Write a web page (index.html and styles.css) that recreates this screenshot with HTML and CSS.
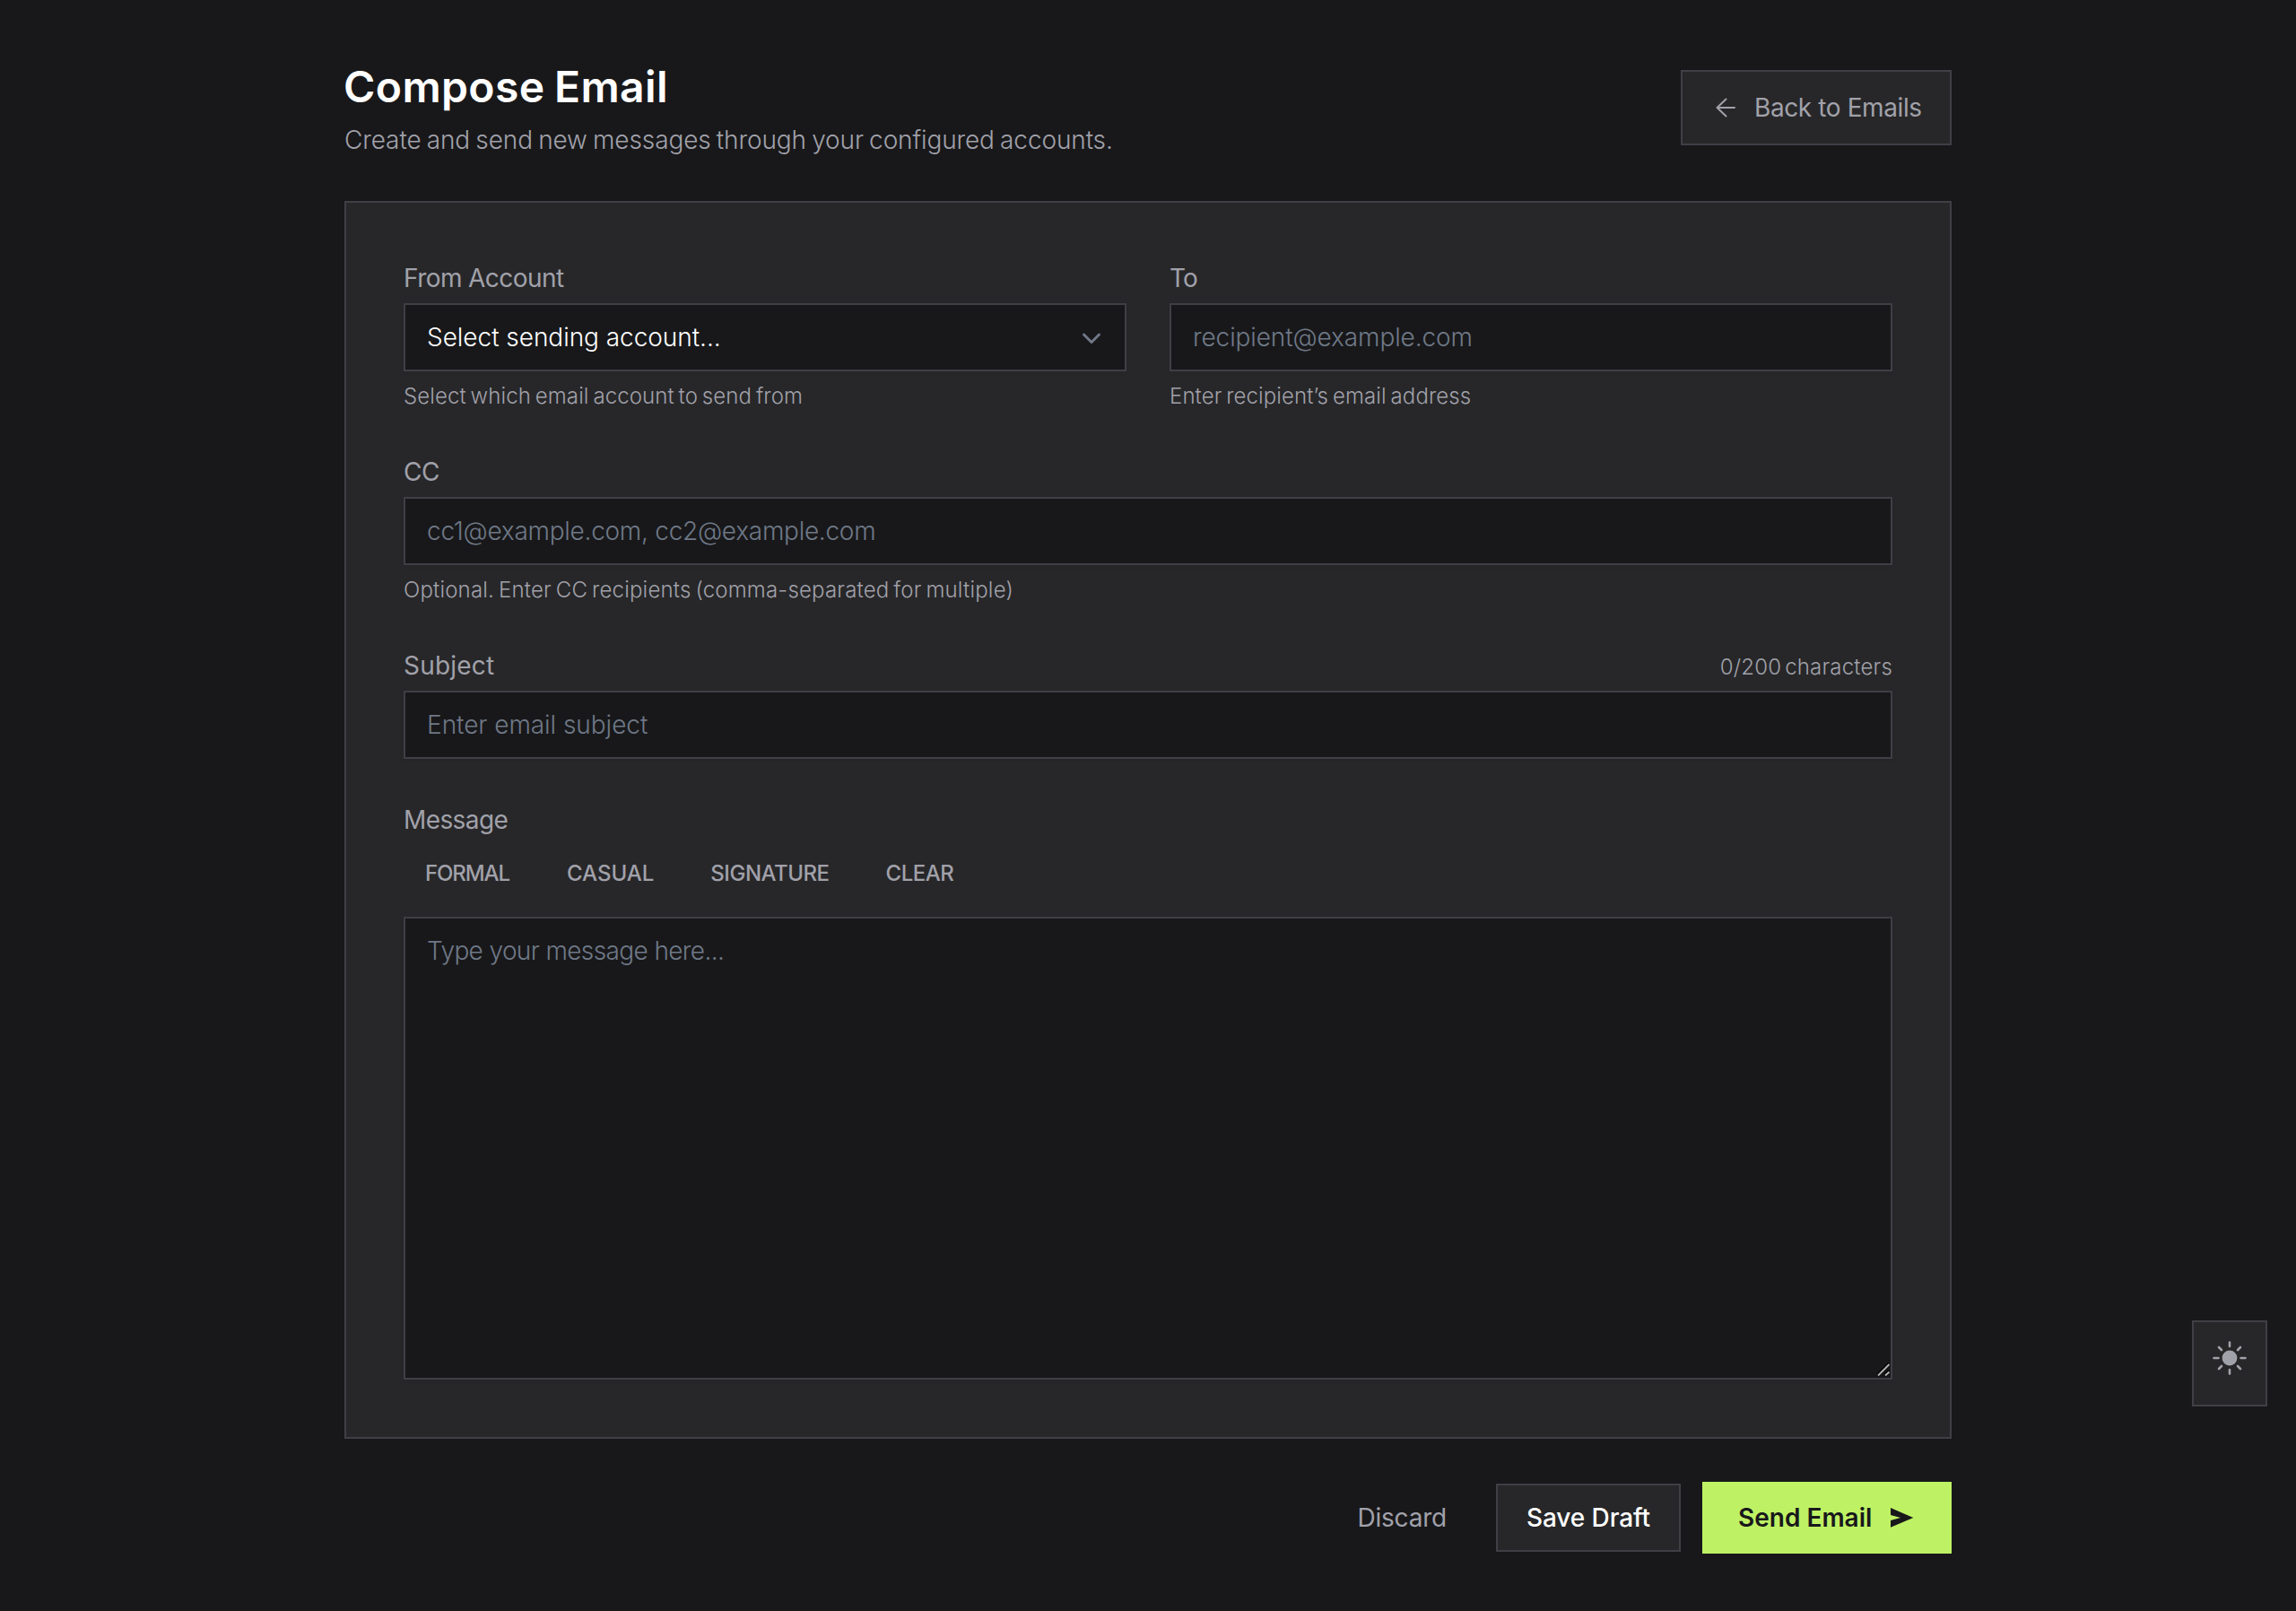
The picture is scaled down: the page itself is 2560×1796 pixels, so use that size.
FILE: index.html
```html
<!DOCTYPE html>
<html lang="en">
<head>
<meta charset="utf-8">
<title>Compose Email</title>
<link rel="stylesheet" href="styles.css">
</head>
<body>
<main class="page">
  <header class="page-header">
    <div>
      <h1 class="title">Compose Email</h1>
      <p class="subtitle">Create and send new messages through your configured accounts.</p>
    </div>
    <a class="btn btn-back">
      <svg class="icon" viewBox="0 0 28 28" width="28" height="28"><path d="M24 14H4.5M14.5 4.5 4.5 14l10 9.5"/></svg>
      <span>Back to Emails</span>
    </a>
  </header>

  <form class="card">
    <div class="row">
      <div class="field">
        <label class="label label-from">From Account</label>
        <div class="select-wrap">
          <select class="control select"><option>Select sending account...</option></select>
          <svg class="chevron" viewBox="0 0 24 24" width="24" height="24"><path d="m3.5 8 8.5 8.5L20.5 8"/></svg>
        </div>
        <p class="hint">Select which email account to send from</p>
      </div>
      <div class="field">
        <label class="label label-to">To</label>
        <input class="control to-input" type="text" placeholder="recipient@example.com">
        <p class="hint">Enter recipient’s email address</p>
      </div>
    </div>

    <div class="field">
      <label class="label">CC</label>
      <input class="control cc-input" type="text" placeholder="cc1@example.com, cc2@example.com">
      <p class="hint hint-cc">Optional. Enter CC recipients (comma-separated for multiple)</p>
    </div>

    <div class="field">
      <div class="label-row">
        <label class="label label-subject">Subject</label>
        <span class="counter">0/200 characters</span>
      </div>
      <input class="control" type="text" placeholder="Enter email subject">
    </div>

    <div class="field">
      <label class="label label-message">Message</label>
      <div class="templates">
        <button type="button" class="template template-formal">FORMAL</button>
        <button type="button" class="template template-casual">CASUAL</button>
        <button type="button" class="template">SIGNATURE</button>
        <button type="button" class="template">CLEAR</button>
      </div>
      <div class="message-wrap">
        <textarea class="control message" placeholder="Type your message here..."></textarea>
        <svg class="grip" viewBox="0 0 16 16" width="16" height="16"><path class="grip-edge" d="M1.5 14.5 14.5 1.5M9.5 14.5l5-5"/><path class="grip-line" d="M2 14.5 14.5 2M10 14.5l4.5-4"/></svg>
      </div>
    </div>
  </form>

  <footer class="actions">
    <button type="button" class="btn btn-discard">Discard</button>
    <button type="button" class="btn btn-save">Save Draft</button>
    <button type="button" class="btn btn-send">
      <span>Send Email</span>
      <svg viewBox="0 0 28 28" width="28" height="28"><path d="M1 3v8l11 3-11 3v7.7L26.3 14z" fill="currentColor"/></svg>
    </button>
  </footer>
</main>

<button type="button" class="theme-toggle" aria-label="Toggle theme">
  <svg viewBox="-20 -20 40 40" width="40" height="40">
    <circle r="8.4" fill="currentColor"/>
    <path d="M0-17.5v4.5M0 13v4.5M-17.5 0h5M12.5 0h5M-12-12l3 3M12-12l-3 3M-12 12l3-3M12 12l-3-3"/>
  </svg>
</button>
</body>
</html>
```
FILE: styles.css
```css
* { box-sizing: border-box; margin: 0; }

:root {
  --bg: #18181a;
  --surface: #272729;
  --border: #3f3f46;
  --muted: #a1a1aa;
  --placeholder: #6f7887;
  --accent: #bef264;
}

body {
  min-height: 100vh;
  background: var(--bg);
  color: var(--muted);
  font: 400 28px/40px Inter, "Liberation Sans", sans-serif;
}

svg { display: block; flex: none; }

.page { width: 1792px; margin: 0 auto; padding: 64px 0; }

.page-header {
  display: flex;
  align-items: center;
  justify-content: space-between;
  height: 112px;
  margin-bottom: 48px;
}

.title {
  padding-top: 1px;
  margin: 0 0 7px -1px;
  color: #fff;
  font-size: 48px;
  font-weight: 600;
  line-height: 64px;
  letter-spacing: .4px;
  word-spacing: -2px;
}

.subtitle { font-weight: 300; letter-spacing: -.12px; word-spacing: -1.5px; }

.btn {
  display: flex;
  align-items: center;
  justify-content: center;
  border: 2px solid transparent;
  background: none;
  color: inherit;
  font: inherit;
  white-space: nowrap;
}

.btn-back {
  width: 302px;
  height: 84px;
  padding-left: 34px;
  justify-content: flex-start;
  gap: 18px;
  background: var(--surface);
  border-color: var(--border);
  letter-spacing: -.4px;
}

.icon { fill: none; stroke: currentColor; stroke-width: 2; stroke-linecap: round; stroke-linejoin: round; }

.card {
  display: flex;
  flex-direction: column;
  gap: 48px;
  padding: 64px;
  background: var(--surface);
  border: 2px solid var(--border);
}

.row { display: grid; grid-template-columns: 1fr 1fr; gap: 48px; }

.field { display: flex; flex-direction: column; }

.label { display: block; margin-bottom: 8px; letter-spacing: -.43px; }
.label-from { letter-spacing: -.52px; word-spacing: -.5px; }
.label-to { letter-spacing: -.8px; }
.label-subject { letter-spacing: .2px; }
.label-message { letter-spacing: -.6px; }

.label-row { display: flex; justify-content: space-between; align-items: baseline; }

.counter {
  font-size: 24px;
  font-weight: 300;
  line-height: 32px;
  letter-spacing: .2px;
  word-spacing: -3px;
}

.control {
  display: block;
  width: 100%;
  height: 76px;
  padding: 0 24px;
  border: 2px solid var(--border);
  border-radius: 0;
  outline: none;
  background: var(--bg);
  box-shadow: 0 2px 4px rgba(0, 0, 0, .05);
  color: #fff;
  font: 300 28px/40px Inter, "Liberation Sans", sans-serif;
  letter-spacing: -.04px;
}
.control::placeholder { color: var(--placeholder); opacity: 1; }
.to-input { letter-spacing: -.11px; }
.cc-input { letter-spacing: -.27px; }

.select-wrap, .message-wrap { position: relative; }
.select { appearance: none; }
.chevron {
  position: absolute;
  top: 27px;
  right: 27px;
  fill: none;
  stroke: var(--placeholder);
  stroke-width: 3;
  stroke-linecap: round;
  stroke-linejoin: round;
}

.hint {
  margin-top: 12px;
  font-size: 24px;
  font-weight: 300;
  line-height: 32px;
  letter-spacing: .1px;
  word-spacing: -2px;
}
.hint-cc { letter-spacing: .19px; }

.templates { display: flex; gap: 16px; margin: 8px 0 24px; }
.template {
  padding: 8px 23px 8px 24px;
  border: 0;
  background: none;
  color: inherit;
  font: 500 24px/32px Inter, "Liberation Sans", sans-serif;
  letter-spacing: -.48px;
}
.template-formal { padding-right: 24px; letter-spacing: -1.1px; }
.template-casual { letter-spacing: 0; }

.message {
  height: 516px;
  padding: 16px 24px;
  resize: none;
  letter-spacing: -.62px;
}
.grip { position: absolute; right: 2px; bottom: 3px; fill: none; }
.grip-edge { stroke: #000; stroke-width: 4; }
.grip-line { stroke: #b4b4b4; stroke-width: 2; }

.actions {
  display: flex;
  align-items: center;
  justify-content: flex-end;
  gap: 24px;
  margin-top: 48px;
}
.btn-discard { height: 76px; padding: 0 29px 0 28px; letter-spacing: -.2px; }
.btn-save {
  width: 206px;
  height: 76px;
  background: var(--surface);
  border-color: var(--border);
  color: #fff;
  font-weight: 500;
  letter-spacing: -.1px;
}
.btn-send {
  width: 278px;
  height: 80px;
  padding-left: 38px;
  justify-content: flex-start;
  gap: 20px;
  background: var(--accent);
  border-color: var(--accent);
  color: #18181b;
  font-weight: 600;
}

.theme-toggle {
  position: fixed;
  right: 32px;
  bottom: 228px;
  width: 84px;
  height: 96px;
  padding: 20px 20px 32px;
  background: var(--surface);
  border: 2px solid var(--border);
  color: var(--muted);
}
.theme-toggle path { fill: none; stroke: currentColor; stroke-width: 2.6; stroke-linecap: round; }
```
